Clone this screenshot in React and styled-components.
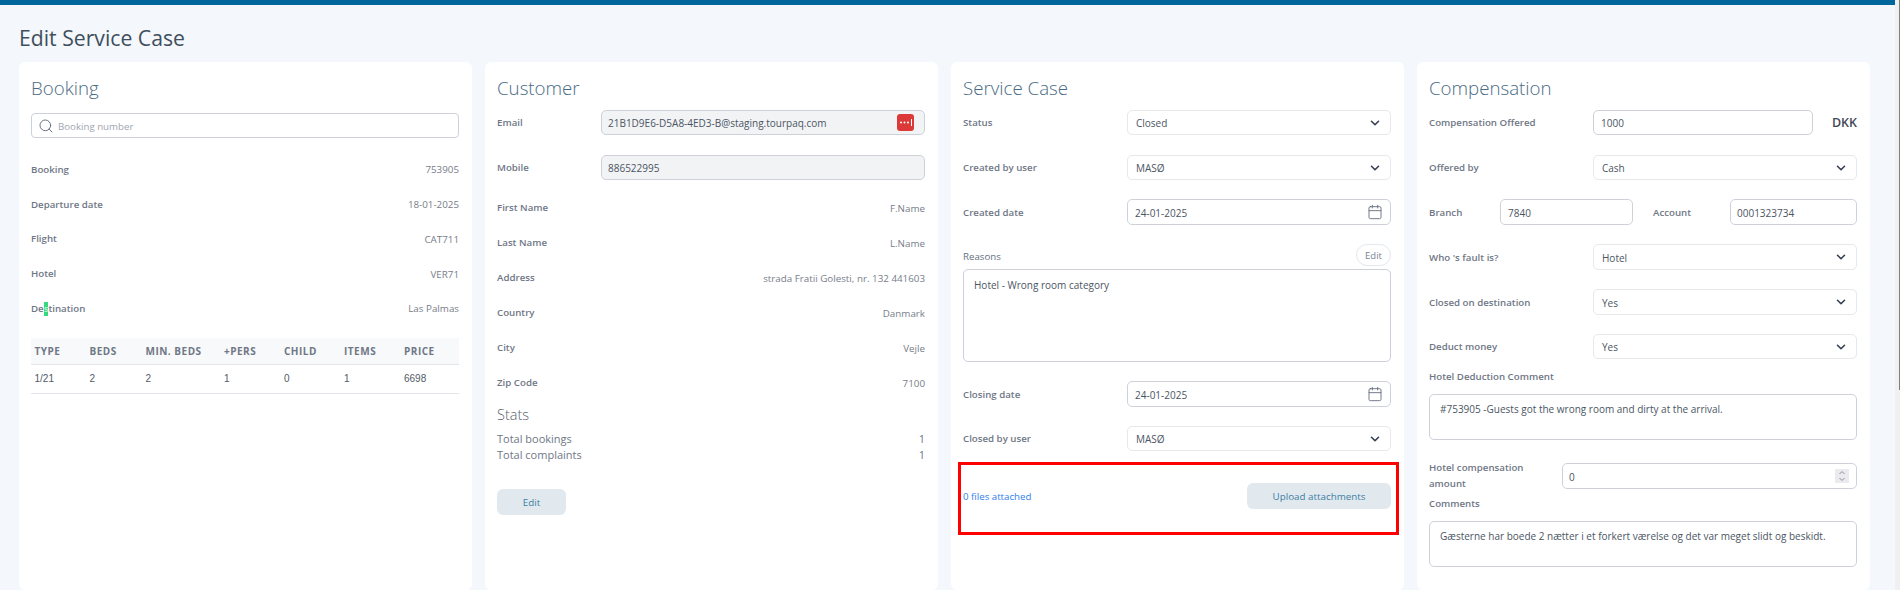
import React from 'react';
import styled, { createGlobalStyle } from 'styled-components';
import { ChevronDown, Search, Calendar } from 'lucide-react';

const Global = createGlobalStyle`
  html, body { margin: 0; padding: 0; height: 590px; overflow: hidden; background: #f4f7fb; }
  body { font-family: "Open Sans", "Noto Sans", sans-serif; }
  * { box-sizing: border-box; }
`;

const Page = styled.div`
  display: flex;
  width: 1900px;
  height: 590px;
  overflow: hidden;
`;
const Main = styled.main`
  flex: 1;
  min-width: 0;
  display: flex;
  flex-direction: column;
`;
const TopBar = styled.div`
  height: 5px;
  background: #00679c;
  flex: none;
`;
const Title = styled.h1`
  margin: 0;
  height: 57px;
  padding: 7px 0 0 19px;
  display: flex;
  align-items: center;
  font-size: 21.2px;
  font-weight: 400;
  color: #3f4f5d;
`;
const Columns = styled.div`
  flex: 1;
  display: grid;
  grid-template-columns: repeat(4, 453px);
  column-gap: 13px;
  padding-left: 19px;
`;
const Card = styled.section`
  background: #fff;
  border-radius: 6px;
  padding: 0 13px 0 12px;
  min-height: 528px;
`;
const Heading = styled.h2`
  margin: 0;
  height: ${p => p.$h || 48}px;
  padding-top: 14px;
  font-size: 18.7px;
  line-height: 24px;
  font-weight: 300;
  color: #4a6b83;
`;
const SearchBox = styled.div`
  height: 25px;
  margin-bottom: 14px;
  display: flex;
  align-items: center;
  gap: 4px;
  padding-left: 6px;
  border: 1px solid #ced1da;
  border-radius: 4px;
  font-size: 9.7px;
  color: #a0a6b0;
  span { padding-top: 1px; }
  svg { color: #6b7280; }
`;
const Info = styled.div`
  height: ${p => p.$h || 35}px;
  padding-top: 1px;
  display: flex;
  align-items: center;
  justify-content: space-between;
  font-size: 9.8px;
`;
const Label = styled.span`
  font-size: 9.7px;
  line-height: 16px;
  font-weight: 600;
  color: #6f7786;
`;
const RowLabel = styled(Label)`
  padding-top: 1px;
`;
const WrapLabel = styled(Label)`
  max-width: 110px;
`;
const Value = styled.span`
  color: #777d89;
`;
const Mark = styled.span`
  display: inline-block;
  background: #35d97e;
  color: #b9f5d2;
  line-height: 14px;
`;
const Table = styled.div`
  margin-top: 12px;
  font-family: "Liberation Sans", Arial, sans-serif;
`;
const TableRow = styled.div`
  display: grid;
  grid-template-columns: 55px 56px 78.5px 60px 60px 60px 1fr;
  align-items: center;
  height: ${p => p.$head ? 27 : 29}px;
  padding: ${p => p.$head ? 1 : 0}px 0 0 3.5px;
  background: ${p => p.$head ? '#f8f9fa' : '#fff'};
  border-bottom: 1px solid #e2e5e9;
  font-family: ${p => p.$head ? '"Open Sans", sans-serif' : 'inherit'};
  font-size: ${p => p.$head ? 10 : 10}px;
  font-weight: ${p => p.$head ? 700 : 400};
  letter-spacing: ${p => p.$head ? 0.5 : 0}px;
  color: ${p => p.$head ? '#6f7786' : '#525a67'};
`;
const FormRow = styled.div`
  display: grid;
  grid-template-columns: ${p => p.$cols || '164px 1fr'};
  align-items: center;
  height: ${p => p.$h ? `${p.$h}px` : 'auto'};
  margin-bottom: ${p => p.$mb ?? 19}px;
`;
const Field = styled.div`
  height: ${p => p.$h || 25}px;
  display: flex;
  align-items: center;
  justify-content: space-between;
  padding: 1px ${p => p.$pr ?? 8}px 0 ${p => p.$pl ?? 7}px;
  border: 1px solid ${p => p.$soft ? '#e6e8ec' : '#ced1da'};
  border-radius: 5px;
  background: ${p => p.$locked ? '#f2f3f5' : '#fff'};
  font-size: 10px;
  color: #4b5563;
  svg { flex: none; margin-top: -1px; }
`;
const Area = styled.div`
  height: ${p => p.$h}px;
  margin-bottom: ${p => p.$mb ?? 20}px;
  padding: ${p => p.$pt ?? 7}px 10px 0;
  border: 1px solid #ced1da;
  border-radius: 5px;
  font-size: 10px;
  line-height: 14px;
  color: #4b5563;
`;
const Chevron = styled(ChevronDown)`
  color: #374151;
`;
const CalIcon = styled(Calendar)`
  color: #6b7280;
`;
const StatsTitle = styled.h3`
  margin: 0;
  height: 31px;
  padding-top: 5px;
  font-size: 14.5px;
  line-height: 20px;
  font-weight: 300;
  color: #55606d;
`;
const StatRow = styled.div`
  height: 16px;
  display: flex;
  justify-content: space-between;
  font-size: 11px;
  font-weight: 500;
  line-height: 16px;
  color: #6f7786;
`;
const Button = styled.button`
  display: block;
  width: ${p => p.$w}px;
  height: 26px;
  margin-top: ${p => p.$mt || 0}px;
  border: 0;
  padding: 0;
  border-radius: 6px;
  background: #e1e9ef;
  color: #3f7ea3;
  font: 400 9.8px "Open Sans", "Noto Sans", sans-serif;
`;
const ReasonHead = styled.div`
  height: 25px;
  display: flex;
  justify-content: space-between;
  align-items: flex-start;
`;
const ReasonLabel = styled.span`
  margin-top: 5px;
  font-size: 9.7px;
  font-weight: 500;
  line-height: 16px;
  color: #667080;
`;
const SmallEdit = styled.button`
  width: 35px;
  height: 22px;
  padding: 0;
  border: 1px solid #e3e9ee;
  border-radius: 11px;
  background: #fff;
  color: #7a8290;
  font: 400 9.5px "Open Sans", "Noto Sans", sans-serif;
`;
const Attach = styled.div`
  position: relative;
  margin-top: 32px;
  display: flex;
  justify-content: space-between;
  align-items: center;
`;
const FilesLink = styled.a`
  font-size: 9.7px;
  color: #2f80ed;
`;
const Annotation = styled.div`
  position: absolute;
  top: -21px;
  left: -5px;
  right: -8px;
  bottom: -26px;
  border: 3px solid #ff0000;
  pointer-events: none;
`;
const Currency = styled.span`
  text-align: right;
  font-size: 12.5px;
  font-weight: 600;
  color: #3f4a56;
`;
const SplitRow = styled.div`
  display: flex;
  align-items: center;
  margin-bottom: 19px;
`;
const SplitLabel = styled(RowLabel)`
  width: ${p => p.$w}px;
  margin-left: ${p => p.$ml || 0}px;
  flex: none;
`;
const SplitField = styled(Field)`
  width: ${p => p.$w}px;
  flex: none;
`;
const BlockLabel = styled.div`
  height: 35px;
  display: flex;
  align-items: center;
`;
const Side = styled.div`
  width: 5px;
  flex: none;
  background: #f0f0f0;
  display: flex;
  justify-content: flex-end;
`;
const Thumb = styled.div`
  width: 1px;
  height: 390px;
  background: #7f7f7f;
`;

const Dropdown = ({ children, h }) => (
  <Field $soft $h={h} $pl={8} $pr={8}>
    <span>{children}</span>
    <Chevron size={14} strokeWidth={2.8} />
  </Field>
);
const DateField = ({ children }) => (
  <Field $h={26} $pr={7}>
    <span>{children}</span>
    <CalIcon size={16} strokeWidth={1.4} />
  </Field>
);
const PassIcon = () => (
  <svg width="17" height="17" viewBox="0 0 17 17" aria-hidden="true">
    <rect width="17" height="17" rx="3" fill="#dc3a38" />
    <circle cx="4" cy="8.500" r="1" fill="#fff" />
    <circle cx="7.500" cy="8.500" r="1" fill="#fff" />
    <circle cx="11" cy="8.500" r="1" fill="#fff" />
    <rect x="14" y="5" width="1" height="7" fill="#fff" />
  </svg>
);
const Spinner = () => (
  <svg width="14" height="14" viewBox="0 0 14 14" aria-hidden="true">
    <rect width="14" height="14" fill="#ebebef" />
    <path d="M4.500 5 7 2.500 9.500 5M4.500 9 7 11.500 9.500 9" fill="none" stroke="#8a8f98" strokeWidth="1" />
  </svg>
);

const bookingInfo = [
  ['Departure date', '18-01-2025'],
  ['Flight', 'CAT711'],
  ['Hotel', 'VER71'],
];
const customerInfo = [
  ['First Name', 'F.Name'],
  ['Last Name', 'L.Name'],
  ['Address', 'strada Fratii Golesti, nr. 132 441603'],
  ['Country', 'Danmark'],
  ['City', 'Vejle'],
  ['Zip Code', '7100'],
];
const heads = ['TYPE', 'BEDS', 'MIN. BEDS', '+PERS', 'CHILD', 'ITEMS', 'PRICE'];
const cells = ['1/21', '2', '2', '1', '0', '1', '6698'];

export default function App() {
  return (
    <Page>
      <Global />
      <Main>
        <TopBar />
        <Title>Edit Service Case</Title>
        <Columns>
          <Card>
            <Heading $h={51}>Booking</Heading>
            <SearchBox><Search size={16} strokeWidth={1.5} /><span>Booking number</span></SearchBox>
            <Info $h={34.75}><Label>Booking</Label><Value>753905</Value></Info>
            {bookingInfo.map(([k, v]) => (
              <Info $h={34.75} key={k}><Label>{k}</Label><Value>{v}</Value></Info>
            ))}
            <Info $h={34.75}><Label>De<Mark>s</Mark>tination</Label><Value>Las Palmas</Value></Info>
            <Table>
              <TableRow $head>{heads.map(h => <span key={h}>{h}</span>)}</TableRow>
              <TableRow>{cells.map((c, i) => <span key={i}>{c}</span>)}</TableRow>
            </Table>
          </Card>

          <Card>
            <Heading>Customer</Heading>
            <FormRow $cols="104px 1fr" $mb={20}>
              <RowLabel>Email</RowLabel>
              <Field $locked $pl={6} $pr={10}>
                <span>21B1D9E6-D5A8-4ED3-B@staging.tourpaq.com</span>
                <PassIcon />
              </Field>
            </FormRow>
            <FormRow $cols="104px 1fr" $mb={10}>
              <RowLabel>Mobile</RowLabel>
              <Field $locked $pl={6}>886522995</Field>
            </FormRow>
            {customerInfo.map(([k, v]) => (
              <Info key={k}><Label>{k}</Label><Value>{v}</Value></Info>
            ))}
            <StatsTitle>Stats</StatsTitle>
            <StatRow><span>Total bookings</span><span>1</span></StatRow>
            <StatRow><span>Total complaints</span><span>1</span></StatRow>
            <Button $w={69} $mt={26}>Edit</Button>
          </Card>

          <Card>
            <Heading>Service Case</Heading>
            <FormRow $mb={20}><RowLabel>Status</RowLabel><Dropdown>Closed</Dropdown></FormRow>
            <FormRow><RowLabel>Created by user</RowLabel><Dropdown>MASØ</Dropdown></FormRow>
            <FormRow><RowLabel>Created date</RowLabel><DateField>24-01-2025</DateField></FormRow>
            <ReasonHead>
              <ReasonLabel>Reasons</ReasonLabel>
              <SmallEdit>Edit</SmallEdit>
            </ReasonHead>
            <Area $h={93} $mb={19} $pt={8}>Hotel - Wrong room category</Area>
            <FormRow><RowLabel>Closing date</RowLabel><DateField>24-01-2025</DateField></FormRow>
            <FormRow $mb={0}><RowLabel>Closed by user</RowLabel><Dropdown>MASØ</Dropdown></FormRow>
            <Attach>
              <FilesLink>0 files attached</FilesLink>
              <Button $w={144}>Upload attachments</Button>
              <Annotation />
            </Attach>
          </Card>

          <Card>
            <Heading>Compensation</Heading>
            <FormRow $cols="164px 1fr 44px" $mb={20}>
              <RowLabel>Compensation Offered</RowLabel>
              <Field>1000</Field>
              <Currency>DKK</Currency>
            </FormRow>
            <FormRow><RowLabel>Offered by</RowLabel><Dropdown>Cash</Dropdown></FormRow>
            <SplitRow>
              <SplitLabel $w={71}>Branch</SplitLabel>
              <SplitField $w={133} $h={26}>7840</SplitField>
              <SplitLabel $w={77} $ml={20}>Account</SplitLabel>
              <SplitField $w={127} $h={26} $pl={6}>0001323734</SplitField>
            </SplitRow>
            <FormRow><RowLabel>Who 's fault is?</RowLabel><Dropdown h={26}>Hotel</Dropdown></FormRow>
            <FormRow><RowLabel>Closed on destination</RowLabel><Dropdown h={26}>Yes</Dropdown></FormRow>
            <FormRow $mb={0}><RowLabel>Deduct money</RowLabel><Dropdown>Yes</Dropdown></FormRow>
            <BlockLabel><Label>Hotel Deduction Comment</Label></BlockLabel>
            <Area $h={46}>#753905 -Guests got the wrong room and dirty at the arrival.</Area>
            <FormRow $cols="133px 1fr" $mb={0} $h={26}>
              <WrapLabel>Hotel compensation amount</WrapLabel>
              <Field $h={26} $pl={6} $pr={7}>0<Spinner /></Field>
            </FormRow>
            <BlockLabel><Label>Comments</Label></BlockLabel>
            <Area $h={46} $mb={0}>Gæsterne har boede 2 nætter i et forkert værelse og det var meget slidt og beskidt.</Area>
          </Card>
        </Columns>
      </Main>
      <Side><Thumb /></Side>
    </Page>
  );
}
